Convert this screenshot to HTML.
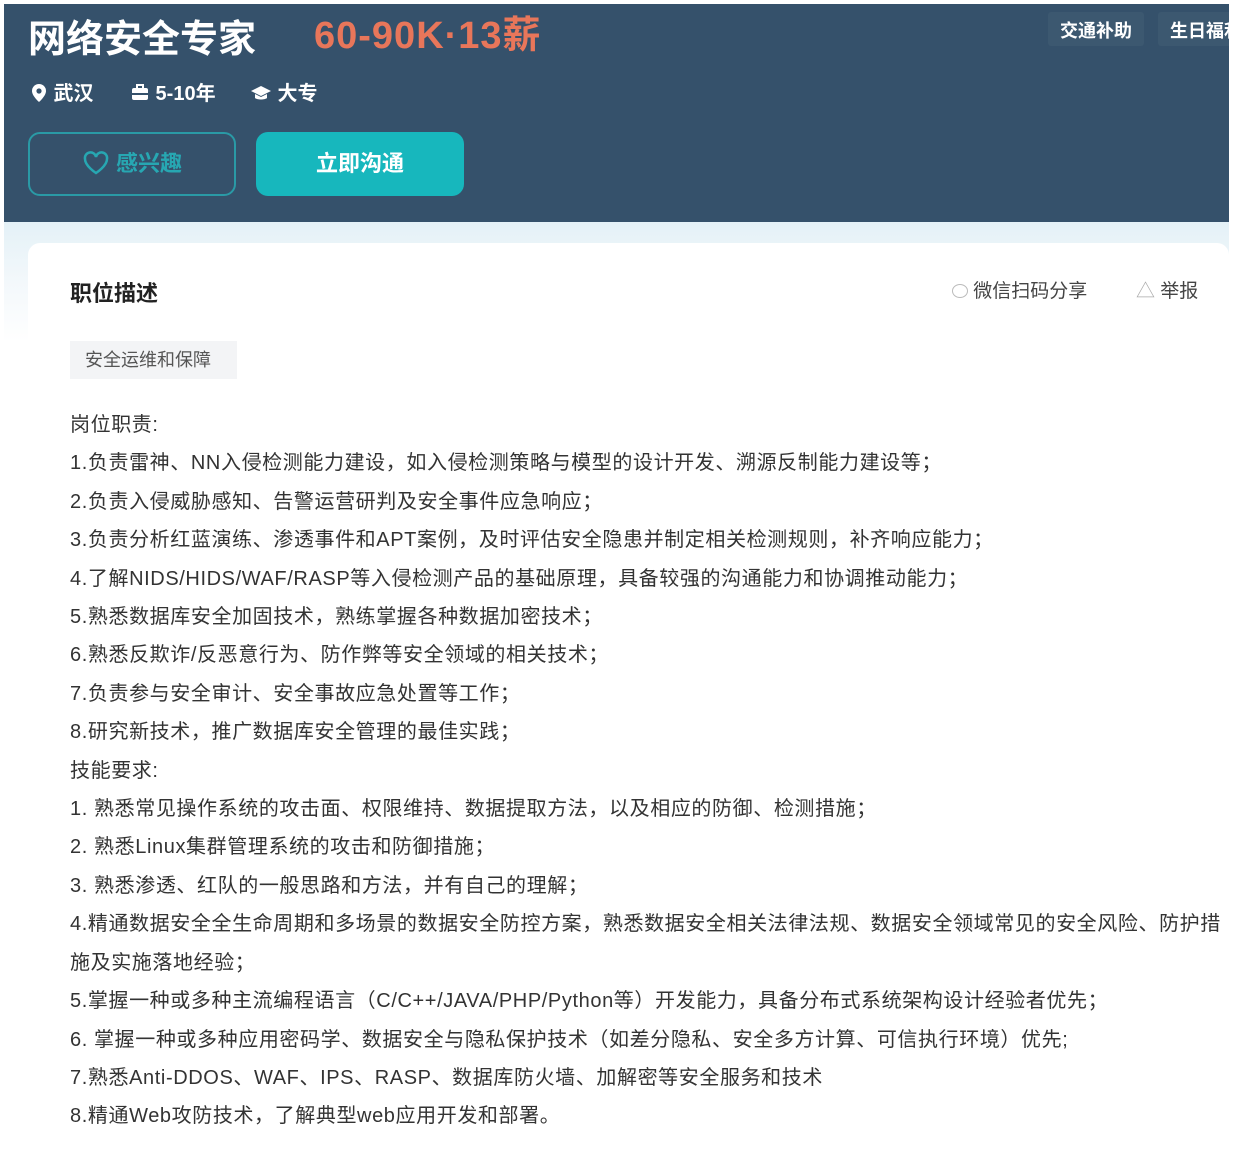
<!DOCTYPE html>
<html><head><meta charset="utf-8"><style>
*{margin:0;padding:0;box-sizing:border-box}
body{width:1234px;height:1160px;background:#fff;font-family:"Liberation Sans","Noto Sans CJK SC",sans-serif;position:relative;overflow:hidden}
.hdr{position:absolute;left:4px;top:4px;width:1225px;height:218px;background:#35516b;overflow:hidden}
.t{position:absolute;left:28px;top:8px;font-size:38px;font-weight:bold;color:#fff}
.sal{position:absolute;left:314px;top:4px;font-size:38px;color:#e8765a;font-weight:bold;letter-spacing:1px}
.meta{position:absolute;top:77px;font-size:20px;color:#fff;font-weight:bold}
.tag{position:absolute;top:8px;height:34px;background:#3c5870;color:#fff;font-size:18px;font-weight:bold;padding:5px 12px;border-radius:3px;white-space:nowrap}
.b1{position:absolute;left:28px;top:132px;width:208px;height:64px;border:2px solid #2a9aa6;border-radius:12px;color:#27a7b2;font-size:22px;font-weight:bold;text-align:center;line-height:60px}
.b2{position:absolute;left:256px;top:132px;width:208px;height:64px;background:#17b7bd;border-radius:12px;color:#fff;font-size:22px;font-weight:bold;text-align:center;line-height:64px}
.bg2{position:absolute;left:4px;top:222px;width:1225px;height:938px;background:linear-gradient(#e4f1f7,#f3f8fb 60px,#fff 120px)}
.card{position:absolute;left:28px;top:243px;width:1201px;height:917px;background:#fff;border-radius:12px}
.h{position:absolute;left:70px;top:276px;font-size:22px;font-weight:bold;color:#222}
.lab{position:absolute;left:70px;top:341px;width:167px;height:38px;background:#f3f4f6;color:#555;font-size:18px;line-height:38px;padding-left:15px}
.txt{position:absolute;left:70px;top:406px;font-size:20px;letter-spacing:0.6px;line-height:38.4px;color:#333;width:1162px}
.sh{position:absolute;top:276px;font-size:19px;color:#444}
</style></head><body>
<div class="hdr">
<div class="tag" style="left:1044px">交通补助</div>
<div class="tag" style="left:1154px">生日福利</div>
</div>
<div class="t">网络安全专家</div>
<div class="sal">60-90K·13薪</div>
<div class="meta" style="left:30px"><svg width="18" height="20" viewBox="0 0 18 20" style="vertical-align:-3px"><path d="M9 1a7 7 0 0 0-7 7c0 5 7 11 7 11s7-6 7-11a7 7 0 0 0-7-7z" fill="#fff"/><circle cx="9" cy="8" r="2.6" fill="#35516b"/></svg> 武汉</div>
<div class="meta" style="left:130px"><svg width="20" height="18" viewBox="0 0 20 18" style="vertical-align:-2px"><rect x="2" y="4" width="16" height="12" rx="2" fill="#fff"/><rect x="7" y="1" width="6" height="4" fill="none" stroke="#fff" stroke-width="2"/><rect x="2" y="9" width="16" height="2" fill="#35516b"/></svg> 5-10年</div>
<div class="meta" style="left:250px"><svg width="22" height="18" viewBox="0 0 22 18" style="vertical-align:-2px"><path d="M11 2L1 7l10 5 10-5z" fill="#fff"/><path d="M5 10v4c2 2 10 2 12 0v-4l-6 3z" fill="#fff"/></svg> 大专</div>
<div class="b1"><svg width="28" height="26" viewBox="0 0 28 26" style="vertical-align:-5px"><path d="M14 23S3 16 3 9a5.5 5.5 0 0 1 11-2 5.5 5.5 0 0 1 11 2c0 7-11 14-11 14z" fill="none" stroke="#27a7b2" stroke-width="2.5"/></svg> 感兴趣</div>
<div class="b2">立即沟通</div>
<div class="bg2"></div>
<div class="card"></div>
<div class="h">职位描述</div>
<div class="sh" style="left:952px"><span style="display:inline-block;width:16px;height:14px;border:1.5px solid #bbb;border-radius:50%;vertical-align:-1px"></span> 微信扫码分享</div>
<div class="sh" style="left:1136px"><span style="color:#aaa">△</span> 举报</div>
<div class="lab">安全运维和保障</div>
<div class="txt">岗位职责:<br>
1.负责雷神、NN入侵检测能力建设，如入侵检测策略与模型的设计开发、溯源反制能力建设等；<br>
2.负责入侵威胁感知、告警运营研判及安全事件应急响应；<br>
3.负责分析红蓝演练、渗透事件和APT案例，及时评估安全隐患并制定相关检测规则，补齐响应能力；<br>
4.了解NIDS/HIDS/WAF/RASP等入侵检测产品的基础原理，具备较强的沟通能力和协调推动能力；<br>
5.熟悉数据库安全加固技术，熟练掌握各种数据加密技术；<br>
6.熟悉反欺诈/反恶意行为、防作弊等安全领域的相关技术；<br>
7.负责参与安全审计、安全事故应急处置等工作；<br>
8.研究新技术，推广数据库安全管理的最佳实践；<br>
技能要求:<br>
1. 熟悉常见操作系统的攻击面、权限维持、数据提取方法，以及相应的防御、检测措施；<br>
2. 熟悉Linux集群管理系统的攻击和防御措施；<br>
3. 熟悉渗透、红队的一般思路和方法，并有自己的理解；<br>
4.精通数据安全全生命周期和多场景的数据安全防控方案，熟悉数据安全相关法律法规、数据安全领域常见的安全风险、防护措<br>施及实施落地经验；<br>
5.掌握一种或多种主流编程语言（C/C++/JAVA/PHP/Python等）开发能力，具备分布式系统架构设计经验者优先；<br>
6. 掌握一种或多种应用密码学、数据安全与隐私保护技术（如差分隐私、安全多方计算、可信执行环境）优先;<br>
7.熟悉Anti-DDOS、WAF、IPS、RASP、数据库防火墙、加解密等安全服务和技术<br>
8.精通Web攻防技术，了解典型web应用开发和部署。
</div>
</body></html>
